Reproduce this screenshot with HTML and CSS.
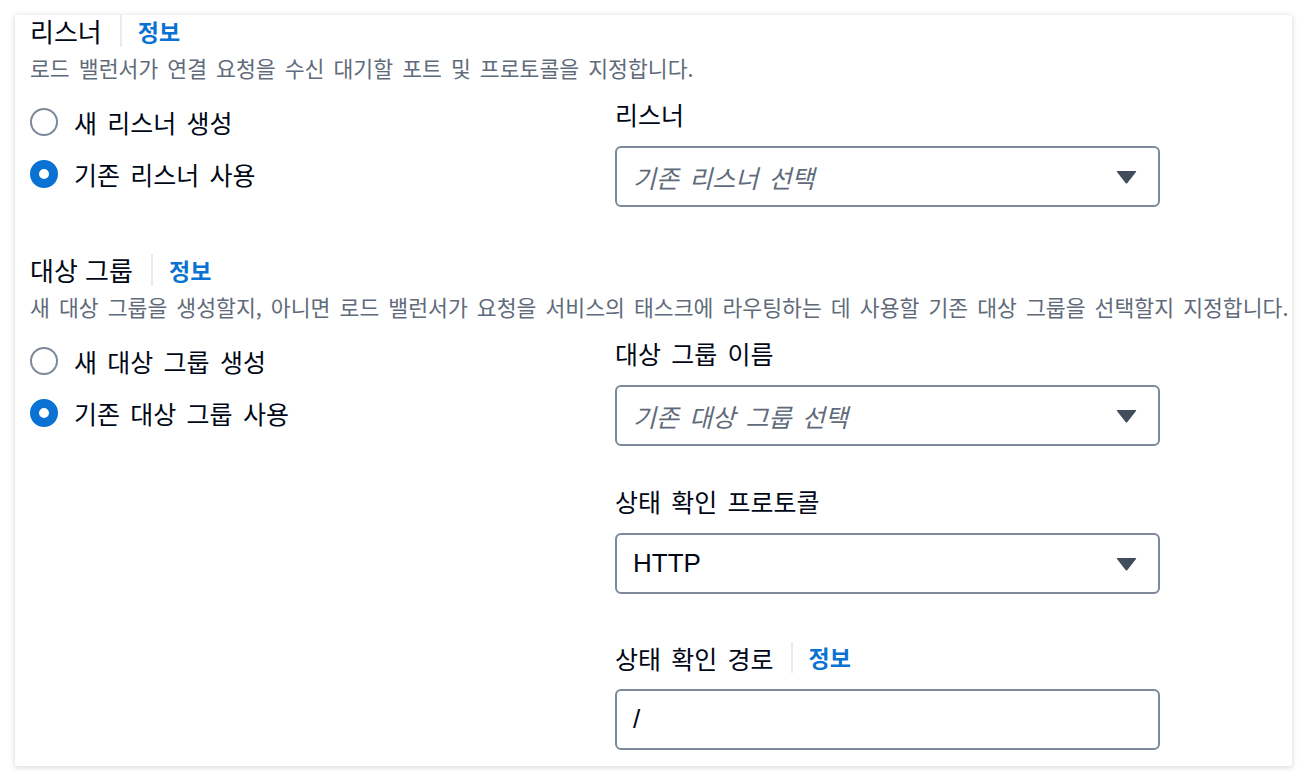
FILE: index.html
```html
<!DOCTYPE html>
<html lang="ko">
<head>
<meta charset="utf-8">
<title>리스너 및 대상 그룹</title>
<link rel="stylesheet" href="styles.css">
</head>
<body>
<div class="card">
  <section class="section">
    <div class="header">
      <h2 class="title">리스너</h2>
      <span class="divider"></span>
      <a class="info">정보</a>
    </div>
    <p class="desc">로드 밸런서가 연결 요청을 수신 대기할 포트 및 프로토콜을 지정합니다.</p>
    <div class="grid">
      <div class="radios">
        <div class="radio"><span class="circle"></span><span class="radio-label">새 리스너 생성</span></div>
        <div class="radio"><span class="circle checked"></span><span class="radio-label">기존 리스너 사용</span></div>
      </div>
      <div class="fields">
        <div class="field">
          <div class="label">리스너</div>
          <div class="select">
            <span class="placeholder">기존 리스너 선택</span>
            <svg class="caret" width="21" height="14" viewBox="0 0 21 14"><path d="M1.5 1 H19.5 Q20.6 1 20 2 L11.4 13 Q10.5 14 9.6 13 L1 2 Q0.4 1 1.5 1 Z" fill="#414d5c"/></svg>
          </div>
        </div>
      </div>
    </div>
  </section>

  <section class="section section-2">
    <div class="header">
      <h2 class="title">대상 그룹</h2>
      <span class="divider"></span>
      <a class="info">정보</a>
    </div>
    <p class="desc">새 대상 그룹을 생성할지, 아니면 로드 밸런서가 요청을 서비스의 태스크에 라우팅하는 데 사용할 기존 대상 그룹을 선택할지 지정합니다.</p>
    <div class="grid">
      <div class="radios">
        <div class="radio"><span class="circle"></span><span class="radio-label">새 대상 그룹 생성</span></div>
        <div class="radio"><span class="circle checked"></span><span class="radio-label">기존 대상 그룹 사용</span></div>
      </div>
      <div class="fields">
        <div class="field">
          <div class="label">대상 그룹 이름</div>
          <div class="select">
            <span class="placeholder">기존 대상 그룹 선택</span>
            <svg class="caret" width="21" height="14" viewBox="0 0 21 14"><path d="M1.5 1 H19.5 Q20.6 1 20 2 L11.4 13 Q10.5 14 9.6 13 L1 2 Q0.4 1 1.5 1 Z" fill="#414d5c"/></svg>
          </div>
        </div>
        <div class="field field-gap">
          <div class="label">상태 확인 프로토콜</div>
          <div class="select">
            <span class="value latin">HTTP</span>
            <svg class="caret" width="21" height="14" viewBox="0 0 21 14"><path d="M1.5 1 H19.5 Q20.6 1 20 2 L11.4 13 Q10.5 14 9.6 13 L1 2 Q0.4 1 1.5 1 Z" fill="#414d5c"/></svg>
          </div>
        </div>
        <div class="field field-gap-lg">
          <div class="label label-info">
            <span>상태 확인 경로</span>
            <span class="divider"></span>
            <a class="info">정보</a>
          </div>
          <div class="input"><span class="value latin">/</span></div>
        </div>
      </div>
    </div>
  </section>
</div>
</body>
</html>
```
FILE: styles.css
```css
* {
  box-sizing: border-box;
}

html, body {
  background: #ffffff;
}

body {
  margin: 0;
  padding: 15px 16px 15px 15px;
  font-family: "Noto Sans CJK KR", "Noto Sans", sans-serif;
  color: #000716;
}

.card {
  background: #ffffff;
  border-radius: 2px;
  box-shadow: 0 1px 5px 1px rgba(0, 7, 22, 0.13);
  padding: 0 15px 16px 15px;
}

.section-2 {
  margin-top: 47px;
}

.header {
  display: flex;
  align-items: center;
  height: 32px;
}

.title {
  margin: 0;
  font-size: 26px;
  font-weight: 400;
  line-height: 32px;
  color: #000716;
}

.divider {
  align-self: stretch;
  width: 2px;
  background: #e9ebed;
  margin: 0 16px 0 18px;
}

.info {
  font-size: 23px;
  font-weight: 700;
  color: #0972d3;
  line-height: 32px;
  cursor: pointer;
}

.desc {
  margin: 7px 0 0 0;
  font-size: 21.6px;
  line-height: 28px;
  word-spacing: 3px;
  color: #5f6b7a;
  white-space: nowrap;
}

.grid {
  display: grid;
  grid-template-columns: 585px 545px;
  margin-top: 17px;
}

.radios {
  display: flex;
  flex-direction: column;
  gap: 16px;
  padding-top: 5px;
}

.radio {
  display: flex;
  align-items: center;
  height: 36px;
}

.circle {
  width: 28px;
  height: 28px;
  border-radius: 50%;
  border: 2px solid #7d8998;
  margin-right: 16px;
  flex: none;
}

.circle.checked {
  border: 9px solid #0972d3;
  background: #ffffff;
}

.radio-label {
  font-size: 25px;
  line-height: 36px;
  word-spacing: 3.3px;
  color: #000716;
}

.fields {
  display: flex;
  flex-direction: column;
}

.field-gap {
  margin-top: 40px;
}

.field-gap-lg {
  margin-top: 48px;
}

.label {
  font-size: 25px;
  line-height: 30px;
  word-spacing: 3.3px;
  color: #000716;
  margin-bottom: 17px;
}

.label-info {
  display: flex;
  align-items: center;
  height: 31px;
  margin-bottom: 16px;
}

.label-info .divider {
  margin: 0 16px 0 17px;
}

.label-info .info {
  line-height: 31px;
}

.select,
.input {
  display: flex;
  align-items: center;
  justify-content: space-between;
  height: 61px;
  border: 2px solid #7d8998;
  border-radius: 6px;
  padding: 0 21px 0 16px;
  background: #ffffff;
}

.placeholder {
  font-size: 25px;
  font-style: italic;
  word-spacing: 3.3px;
  color: #5f6b7a;
}

.value {
  color: #000716;
}

.latin {
  font-family: "Liberation Sans", "Noto Sans", sans-serif;
  font-size: 26px;
}

.caret {
  display: block;
  flex: none;
}
```
